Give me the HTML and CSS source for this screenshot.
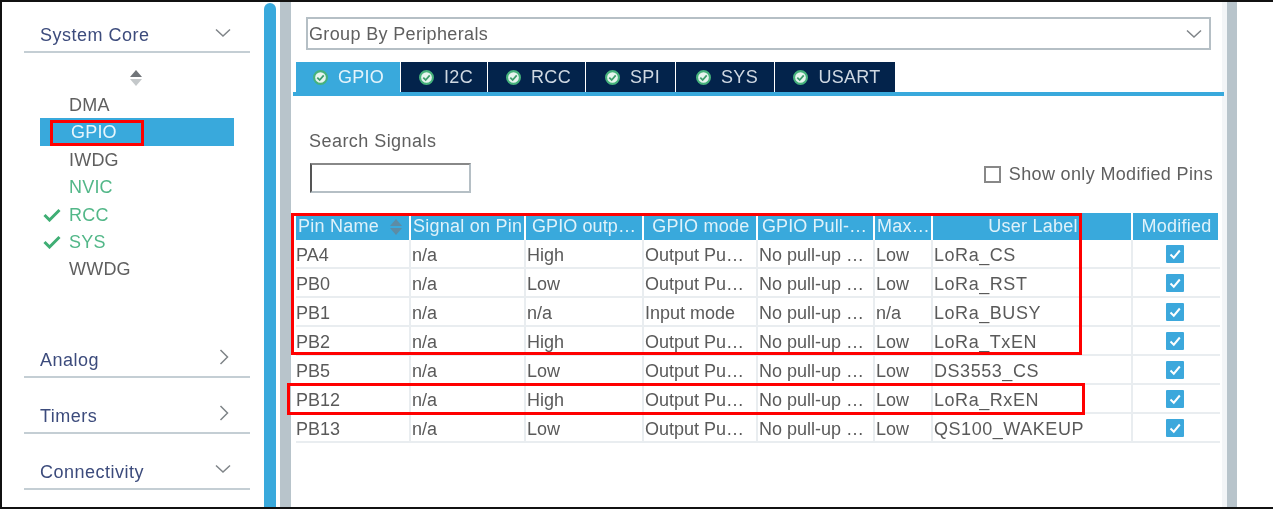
FILE: index.html
```html
<!DOCTYPE html>
<html lang="en">
<head>
<meta charset="utf-8">
<title>Pinout configuration - GPIO</title>
<link rel="stylesheet" href="styles.css">
</head>
<body>
<div class="frame">
  <aside class="sidebar">
    <div class="cat cat-first"><span>System Core</span>
      <svg class="chev" viewBox="0 0 16 10"><path d="M1 1.500 8 8l7-6.500"/></svg></div>
    <div class="sort"><svg viewBox="0 0 12 16"><path class="up" d="M6 0l6 7H0z"/><path class="down" d="M6 16l6-7H0z"/></svg></div>
    <ul class="items">
      <li>DMA</li>
      <li class="sel">GPIO</li>
      <li>IWDG</li>
      <li class="ok">NVIC</li>
      <li class="ok"><svg class="tick" viewBox="0 0 18 14"><path d="M1.500 7 6.500 12 16.500 2"/></svg>RCC</li>
      <li class="ok"><svg class="tick" viewBox="0 0 18 14"><path d="M1.500 7 6.500 12 16.500 2"/></svg>SYS</li>
      <li>WWDG</li>
    </ul>
    <div class="cat cat-analog"><span>Analog</span>
      <svg class="chev-r" viewBox="0 0 10 16"><path d="M1.500 1 8.500 8l-7 7"/></svg></div>
    <div class="cat"><span>Timers</span>
      <svg class="chev-r" viewBox="0 0 10 16"><path d="M1.500 1 8.500 8l-7 7"/></svg></div>
    <div class="cat"><span>Connectivity</span>
      <svg class="chev" viewBox="0 0 16 10"><path d="M1 1.500 8 8l7-6.500"/></svg></div>
  </aside>
  <div class="scrollbar"></div>
  <div class="gutter"></div>
  <main class="main">
    <div class="select"><span>Group By Peripherals</span>
      <svg class="chev" viewBox="0 0 16 10"><path d="M1 1.500 8 8l7-6.500"/></svg></div>
    <nav class="tabs">
      <div class="tab active t1"><svg class="badge" viewBox="0 0 14 14"><circle cx="7" cy="7" r="6"/><path d="M4 7.200 6.200 9.300 10 5"/></svg>GPIO</div>
      <div class="tab t2"><svg class="badge" viewBox="0 0 14 14"><circle cx="7" cy="7" r="6"/><path d="M4 7.200 6.200 9.300 10 5"/></svg>I2C</div>
      <div class="tab t3"><svg class="badge" viewBox="0 0 14 14"><circle cx="7" cy="7" r="6"/><path d="M4 7.200 6.200 9.300 10 5"/></svg>RCC</div>
      <div class="tab t4"><svg class="badge" viewBox="0 0 14 14"><circle cx="7" cy="7" r="6"/><path d="M4 7.200 6.200 9.300 10 5"/></svg>SPI</div>
      <div class="tab t5"><svg class="badge" viewBox="0 0 14 14"><circle cx="7" cy="7" r="6"/><path d="M4 7.200 6.200 9.300 10 5"/></svg>SYS</div>
      <div class="tab t6"><svg class="badge" viewBox="0 0 14 14"><circle cx="7" cy="7" r="6"/><path d="M4 7.200 6.200 9.300 10 5"/></svg>USART</div>
    </nav>
    <div class="filters">
      <div class="search">
        <label class="search-label">Search Signals</label>
        <div class="search-input"></div>
      </div>
      <div class="only"><span class="box"></span>Show only Modified Pins</div>
    </div>
    <div class="grid">
      <div class="th">Pin Name<svg class="th-sort" viewBox="0 0 12 16"><path d="M6 0l6 7H0z"/><path d="M6 16l6-7H0z"/></svg></div><div class="th">Signal on Pin</div><div class="th inset">GPIO outp…</div><div class="th mid">GPIO mode</div><div class="th inset-s">GPIO Pull-…</div><div class="th">Max…</div><div class="th mid">User Label</div><div class="th mid">Modified</div>

      <div class="td pin">PA4</div><div class="td">n/a</div><div class="td">High</div><div class="td">Output Pu…</div><div class="td">No pull-up …</div><div class="td">Low</div><div class="td label">LoRa_CS</div><div class="td chk"><svg viewBox="0 0 18 18"><rect width="18" height="18" rx="1"/><path d="M4.500 9.500 7.800 12.700 13.800 5.500"/></svg></div>

      <div class="td pin">PB0</div><div class="td">n/a</div><div class="td">Low</div><div class="td">Output Pu…</div><div class="td">No pull-up …</div><div class="td">Low</div><div class="td label">LoRa_RST</div><div class="td chk"><svg viewBox="0 0 18 18"><rect width="18" height="18" rx="1"/><path d="M4.500 9.500 7.800 12.700 13.800 5.500"/></svg></div>

      <div class="td pin">PB1</div><div class="td">n/a</div><div class="td">n/a</div><div class="td">Input mode</div><div class="td">No pull-up …</div><div class="td">n/a</div><div class="td label">LoRa_BUSY</div><div class="td chk"><svg viewBox="0 0 18 18"><rect width="18" height="18" rx="1"/><path d="M4.500 9.500 7.800 12.700 13.800 5.500"/></svg></div>

      <div class="td pin">PB2</div><div class="td">n/a</div><div class="td">High</div><div class="td">Output Pu…</div><div class="td">No pull-up …</div><div class="td">Low</div><div class="td label">LoRa_TxEN</div><div class="td chk"><svg viewBox="0 0 18 18"><rect width="18" height="18" rx="1"/><path d="M4.500 9.500 7.800 12.700 13.800 5.500"/></svg></div>

      <div class="td pin">PB5</div><div class="td">n/a</div><div class="td">Low</div><div class="td">Output Pu…</div><div class="td">No pull-up …</div><div class="td">Low</div><div class="td label">DS3553_CS</div><div class="td chk"><svg viewBox="0 0 18 18"><rect width="18" height="18" rx="1"/><path d="M4.500 9.500 7.800 12.700 13.800 5.500"/></svg></div>

      <div class="td pin">PB12</div><div class="td">n/a</div><div class="td">High</div><div class="td">Output Pu…</div><div class="td">No pull-up …</div><div class="td">Low</div><div class="td label">LoRa_RxEN</div><div class="td chk"><svg viewBox="0 0 18 18"><rect width="18" height="18" rx="1"/><path d="M4.500 9.500 7.800 12.700 13.800 5.500"/></svg></div>

      <div class="td pin">PB13</div><div class="td">n/a</div><div class="td">Low</div><div class="td">Output Pu…</div><div class="td">No pull-up …</div><div class="td">Low</div><div class="td label">QS100_WAKEUP</div><div class="td chk"><svg viewBox="0 0 18 18"><rect width="18" height="18" rx="1"/><path d="M4.500 9.500 7.800 12.700 13.800 5.500"/></svg></div>
    </div>
  </main>
  <div class="gutter gutter-r"></div>
  <div class="rest"></div>
  <div class="mark mark-gpio"></div>
  <div class="mark mark-rows"></div>
  <div class="mark mark-rxen"></div>
</div>
</body>
</html>
```

FILE: styles.css
```css
* { box-sizing: border-box; }
html, body { margin: 0; padding: 0; background: #fff; }
body { width: 1273px; height: 509px; overflow: hidden; font-family: "Liberation Sans", Arial, sans-serif; color: #555; }

.frame { position: relative; display: flex; width: 1273px; height: 509px; border-top: 2px solid #111; border-left: 2px solid #111; border-bottom: 2px solid #111; background: #fff; overflow: hidden; filter: blur(.3px); }

.sidebar { width: 262px; height: 100%; padding: 16px 14px 0 22px; flex: none; position: relative; }
.cat { display: flex; align-items: center; justify-content: space-between; width: 226px; height: 35px; padding: 1px 19px 0 16px; border-bottom: 2px solid #c4ced4; color: #3c4b7c; font-size: 18px; letter-spacing: .5px; margin-bottom: 21px; }
.cat-first { margin-bottom: 0; padding-top: 2px; }
.chev { width: 16px; height: 10px; flex: none; margin-top: -6px; }
.chev-r { width: 10px; height: 16px; flex: none; margin-right: 2px; margin-top: -6px; }
.chev path, .chev-r path { fill: none; stroke: #7f8488; stroke-width: 1.500; }

.sort { display: flex; justify-content: center; width: 226px; height: 38px; padding-top: 17px; padding-right: 3px; }
.sort svg { width: 12px; height: 16px; }
.sort .up { fill: #707478; }
.sort .down { fill: #c4c8ca; }

.items { list-style: none; margin: 0 0 0 16px; padding: 0; width: 194px; height: 252px; font-size: 18px; letter-spacing: .2px; }
.items li { position: relative; height: 27.400px; line-height: 29px; padding-left: 29px; color: #5f5f5f; }
.items li.sel { background: #39a9dc; color: #e8f6fc; padding-left: 31px; }
.items li.ok { color: #52b788; }
.tick { position: absolute; left: 3px; top: 7px; width: 18px; height: 14px; }
.tick path { fill: none; stroke: #3fae74; stroke-width: 3; }

.scrollbar { width: 12px; height: 100%; flex: none; background: #39a9dc; border-radius: 6px 6px 0 0; margin-top: 1px; }
.gutter { width: 11px; height: 100%; flex: none; margin-left: 4px; background: #b8c4cb; }
.gutter-r { margin-left: 0; width: 10px; }
.rest { flex: 1; }

.main { width: 936px; height: 100%; flex: none; padding: 15px 6px 0 2px; border-right: 5px solid #f3f5f7; font-size: 18px; }
.select { display: flex; align-items: center; justify-content: space-between; width: 905px; height: 33px; margin-left: 13px; padding: 2px 7px 0 1px; border: 2px solid #b5bfc5; color: #5f5f5f; letter-spacing: .35px; }
.select .chev { margin-top: -2px; }

.tabs { display: flex; gap: 1px; margin-top: 12px; width: 931px; height: 34px; padding-left: 3px; border-bottom: 4px solid #39a9dc; }
.tab { display: flex; align-items: center; justify-content: center; height: 30px; padding-left: 4px; gap: 10px; background: #03234b; color: #cfd8e2; letter-spacing: .3px; }
.tab.active { background: #39a9dc; color: #e4f4fb; padding-left: 1px; }
.t1 { width: 104px; } .t2 { width: 86px; } .t3 { width: 97px; } .t4 { width: 89px; } .t5 { width: 98px; } .t6 { width: 120px; }
.badge { width: 15px; height: 15px; flex: none; }
.badge circle { fill: #e6f5ee; stroke: #46b27c; stroke-width: 2; }
.badge path { fill: none; stroke: #3d9d6c; stroke-width: 1.600; }

.filters { display: flex; justify-content: space-between; width: 920px; height: 117px; padding: 33px 0 0 16px; }
.search-label { display: block; color: #5f5f5f; line-height: 24px; letter-spacing: .45px; }
.search-input { width: 161px; height: 30px; margin: 10px 0 0 1px; border: 2px solid #b5bfc5; border-left-color: #555; border-top-color: #888; }
.only { display: flex; align-items: center; height: 20px; margin-top: 35px; color: #5f5f5f; letter-spacing: .35px; }
.box { width: 17px; height: 17px; margin-right: 8px; border: 2px solid #888; background: #fff; }

.grid { display: grid; grid-template-columns: 115px 115px 118px 114px 117px 58px 200px 87px; grid-template-rows: 27px; grid-auto-rows: 29px; width: 924px; margin-left: 3px; }
.th { display: flex; align-items: center; justify-content: space-between; height: 27px; margin: 0 2px 0 0; padding-left: 2px; background: #39a9dc; color: #dff2fa; white-space: nowrap; overflow: hidden; letter-spacing: .25px; }
.th.mid { justify-content: center; }
.th.inset { padding-left: 6px; letter-spacing: .1px; }
.th.inset-s { padding-left: 4px; letter-spacing: .1px; }
.th-sort { width: 12px; height: 16px; margin-right: 7px; flex: none; }
.th-sort path { fill: #5d8ca5; }
.td { display: flex; align-items: center; border-right: 2px solid #e9edf0; border-bottom: 2px solid #e9edf0; padding: 3px 0 0 1px; color: #5a5a5a; white-space: nowrap; overflow: hidden; }
.pin { padding-left: 0; }
.label { letter-spacing: .55px; }
.chk { justify-content: center; border-right: 0; padding: 0 4px 0 0; }
.chk svg { width: 18px; height: 18px; }
.chk rect { fill: #3ca8dc; }
.chk path { fill: none; stroke: #fff; stroke-width: 2; }

.mark { position: absolute; border: 3px solid #f00; pointer-events: none; }
.mark-gpio { left: 48px; top: 118px; width: 94px; height: 26px; }
.mark-rows { left: 289px; top: 211px; width: 791px; height: 142px; }
.mark-rxen { left: 285px; top: 381px; width: 798px; height: 32px; }
```
